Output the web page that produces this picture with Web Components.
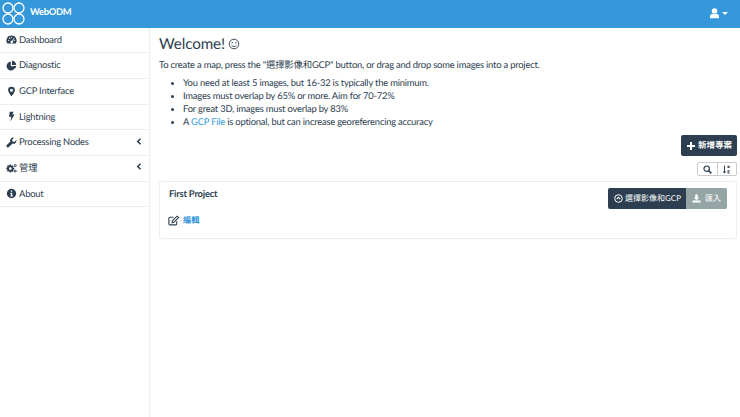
<!DOCTYPE html>
<html>
<head>
<meta charset="utf-8">
<style>
  html, body { margin: 0; height: 100%; background: #fff; }
  body { font: 9.4px/1.43 Lato, "Noto Sans CJK TC", sans-serif; letter-spacing: -.2px; color: #2c3e50; overflow: hidden; text-rendering: geometricPrecision; }
  svg { display: block; }
</style>
</head>
<body>
<wo-app>
  <wo-navbar slot="top"></wo-navbar>
  <wo-sidebar slot="side">
    <wo-nav-item label="Dashboard" icon="dashboard"></wo-nav-item>
    <wo-nav-item label="Diagnostic" icon="pie"></wo-nav-item>
    <wo-nav-item label="GCP Interface" icon="pin"></wo-nav-item>
    <wo-nav-item label="Lightning" icon="bolt"></wo-nav-item>
    <wo-nav-item label="Processing Nodes" icon="wrench" arrow></wo-nav-item>
    <wo-nav-item label="管理" icon="cogs" arrow></wo-nav-item>
    <wo-nav-item label="About" icon="info"></wo-nav-item>
  </wo-sidebar>
  <wo-welcome></wo-welcome>
  <wo-toolbar></wo-toolbar>
  <wo-project name="First Project"></wo-project>
</wo-app>

<script>
(function () {
  'use strict';

  // Icons drawn by hand on a 16x16 box
  var ICONS = {
    dashboard: '<path fill-rule="evenodd" d="M8 2a7.5 7.5 0 0 0-6.6 11l.5.8h12.2l.5-.8A7.5 7.5 0 0 0 8 2zM4 8.2a1 1 0 1 1 0 2 1 1 0 0 1 0-2zm1.4-3a1 1 0 1 1 0 2 1 1 0 0 1 0-2zM8 3.9a1 1 0 1 1 0 2 1 1 0 0 1 0-2zm3.6 1.6.8.5-2.7 4.3a1.8 1.8 0 1 1-.9-.5zM12 8.2a1 1 0 1 1 0 2 1 1 0 0 1 0-2z"/>',
    pie: '<path d="M7 2.4A6.4 6.4 0 1 0 13.6 9H7z"/><path d="M8.6 1v6.2h6.3A6.3 6.3 0 0 0 8.6 1z"/><path d="M10.5 8.6H15a6.4 6.4 0 0 1-1.6 3.6z"/>',
    pin: '<path fill-rule="evenodd" d="M8 1a5 5 0 0 0-5 5c0 2.2 3 6.4 5 9 2-2.600 5-6.800 5-9a5 5 0 0 0-5-5zm0 3a2.200 2.200 0 1 1 0 4.400A2.200 2.200 0 0 1 8 4z"/>',
    bolt: '<path d="M5.500 1h5.500L9.300 5.200h3.200L6.300 15.200l1.500-7H4.300z"/>',
    wrench: '<path d="M15 4.300l-2.900 2.800-2.600-.6-.6-2.600L11.700 1A4.300 4.300 0 0 0 6.300 6.500L1.200 11.600a2.200 2.200 0 0 0 3.100 3.100l5.200-5.100A4.300 4.300 0 0 0 15 4.300z"/>',
    cogs: '<g transform="translate(0 -1.300)"><path fill-rule="evenodd" d="M5.300 3.500h2l.3 1.400 1 .4 1.200-.8 1.400 1.400-.8 1.200.4 1 1.400.3v2l-1.400.3-.4 1 .8 1.200-1.400 1.400-1.200-.8-1 .4-.3 1.300h-2L5 13.800l-1-.4-1.200.8-1.400-1.400.8-1.200-.4-1L.4 10.300v-2l1.400-.3.4-1-.8-1.200 1.400-1.400L4 4.900l1-.4zM6.300 7.300a2 2 0 1 0 0 4 2 2 0 0 0 0-4z"/><path fill-rule="evenodd" d="M13.500 3a2 2 0 1 0 0 4 2 2 0 0 0 0-4zm0 1.200a.8.8 0 1 1 0 1.600.8.8 0 0 1 0-1.600zM13.500 11a2 2 0 1 0 0 4 2 2 0 0 0 0-4zm0 1.200a.8.8 0 1 1 0 1.600.8.8 0 0 1 0-1.600z"/></g>',
    info: '<path fill-rule="evenodd" d="M8 1.200a6.800 6.800 0 1 0 0 13.600A6.800 6.800 0 0 0 8 1.200zM6.900 3.600h2.200v2H6.900zM6.300 6.800h2.800v4h.8v1.500H6.300v-1.500h.8V8.300h-.8z"/>'
  };

  function icon(name, size) {
    return '<svg width="' + size + '" height="' + size + '" viewBox="0 0 16 16" fill="currentColor" aria-hidden="true">' +
      ICONS[name] + '</svg>';
  }

  class WoApp extends HTMLElement {
    connectedCallback() {
      var root = this.attachShadow({ mode: 'open' });
      root.innerHTML =
        '<style>' +
          ':host { display: grid; grid-template-columns: 150px 1fr; grid-template-rows: 27.500px 1fr; height: 417px; }' +
          '.top { grid-column: 1 / 3; }' +
          '.side { border-right: 1px solid #eee; }' +
          '.main { padding: 6px 3px 0 9px; min-width: 0; }' +
        '</style>' +
        '<div class="top"><slot name="top"></slot></div>' +
        '<div class="side"><slot name="side"></slot></div>' +
        '<div class="main"><slot></slot></div>';
    }
  }

  class WoNavbar extends HTMLElement {
    connectedCallback() {
      var root = this.attachShadow({ mode: 'open' });
      root.innerHTML =
        '<style>' +
          ':host { display: flex; height: 27.500px; align-items: center; justify-content: space-between; background: #3498db; color: #fff; }' +
          '.brand { display: flex; align-items: center; gap: 4px; padding-left: 1px; font-weight: 700; letter-spacing: -.3px; }' +
          '.brand span { padding-bottom: 2px; }' +
          '.user { display: flex; align-items: center; gap: 2px; padding-right: 12px; }' +
          '.caret { width: 0; height: 0; border: 3px solid transparent; border-top-color: #fff; border-bottom: 0; }' +
        '</style>' +
        '<div class="brand">' +
          '<svg width="25" height="25" viewBox="0 0 25 25" fill="none" stroke="#fff" stroke-width="1.300">' +
            '<circle cx="7" cy="7" r="5"/><circle cx="18" cy="7" r="5"/>' +
            '<circle cx="7" cy="18" r="5"/><circle cx="18" cy="18" r="5"/>' +
          '</svg>' +
          '<span>WebODM</span>' +
        '</div>' +
        '<div class="user">' +
          '<svg width="11" height="11" viewBox="0 0 16 16" fill="#fff"><circle cx="8" cy="4.500" r="4"/><path d="M1.500 15v-2.500C1.500 10 3.500 8.500 5 8.500c1 .8 5 .8 6 0 1.500 0 3.500 1.500 3.500 4V15z"/></svg>' +
          '<span class="caret"></span>' +
        '</div>';
    }
  }

  class WoSidebar extends HTMLElement {
    connectedCallback() {
      var root = this.attachShadow({ mode: 'open' });
      root.innerHTML =
        '<style>:host { display: flex; flex-direction: column; }</style><slot></slot>';
    }
  }

  class WoNavItem extends HTMLElement {
    connectedCallback() {
      var root = this.attachShadow({ mode: 'open' });
      var arrow = this.hasAttribute('arrow') ?
        '<svg class="arrow" width="6" height="7" viewBox="0 0 6 7" fill="none" stroke="currentColor" stroke-width="1.500"><path d="M4.500 .8 1.700 3.500l2.800 2.700"/></svg>' : '';
      root.innerHTML =
        '<style>' +
          ':host { display: flex; height: 25.700px; box-sizing: border-box; align-items: center; gap: 2px; padding: 0 8px 0 6px; border-bottom: 1px solid #eee; }' +
          '.ico { width: 11px; display: flex; justify-content: center; }' +
          '.label { flex: 1; white-space: nowrap; padding-top: 1px; }' +
          '.arrow { margin-right: -1px; margin-bottom: 3px; }' +
        '</style>' +
        '<span class="ico">' + icon(this.getAttribute('icon'), 11) + '</span>' +
        '<span class="label">' + this.getAttribute('label') + '</span>' + arrow;
    }
  }

  class WoWelcome extends HTMLElement {
    connectedCallback() {
      var root = this.attachShadow({ mode: 'open' });
      root.innerHTML =
        '<style>' +
          ':host { display: block; }' +
          'h3 { margin: 0; display: flex; align-items: center; gap: 3px; height: 20px; font-size: 15.200px; font-weight: 400; line-height: 20px; letter-spacing: -.1px; }' +
          'p { margin: 5px 0 0; height: 14px; line-height: 14px; white-space: nowrap; }' +
          'ul { margin: 5.500px 0 0; padding: 0 0 0 24px; }' +
          'li { height: 12.900px; line-height: 12.900px; white-space: nowrap; }' +
          'a { color: #3498db; text-decoration: none; }' +
        '</style>' +
        '<h3>Welcome! <svg width="12" height="12" viewBox="0 0 12 12" fill="none" stroke="#2c3e50" stroke-width=".9"><circle cx="6" cy="6" r="4.800"/><path d="M3.500 7.200c1 1.700 4 1.700 5 0"/><path d="M4.200 4v1.200M7.800 4v1.200" stroke-width="1.100"/></svg></h3>' +
        '<p>To create a map, press the "選擇影像和GCP" button, or drag and drop some images into a project.</p>' +
        '<ul>' +
          '<li>You need at least 5 images, but 16-32 is typically the minimum.</li>' +
          '<li>Images must overlap by 65% or more. Aim for 70-72%</li>' +
          '<li>For great 3D, images must overlap by 83%</li>' +
          '<li>A <a>GCP File</a> is optional, but can increase georeferencing accuracy</li>' +
        '</ul>';
    }
  }

  class WoToolbar extends HTMLElement {
    connectedCallback() {
      var root = this.attachShadow({ mode: 'open' });
      root.innerHTML =
        '<style>' +
          ':host { display: flex; flex-direction: column; align-items: flex-end; gap: 6px; margin-top: 5.500px; }' +
          '.add { display: flex; align-items: center; gap: 3px; height: 21px; padding: 0 5px 0 6px; background: #2c3e50; color: #fff; border-radius: 2px; font-size: 8.500px; font-weight: 700; letter-spacing: 0; }' +
          '.group { display: flex; height: 14px; border: 1px solid #ccc; border-radius: 2px; box-sizing: border-box; }' +
          '.group span { display: flex; align-items: center; justify-content: center; width: 18.500px; color: #2c3e50; }' +
          '.group span + span { border-left: 1px solid #ccc; }' +
        '</style>' +
        '<div class="add">' +
          '<svg width="8" height="8" viewBox="0 0 8 8" fill="#fff"><path d="M3 0h2v3h3v2H5v3H3V5H0V3h3z"/></svg>' +
          '<span>新增專案</span>' +
        '</div>' +
        '<div class="group">' +
          '<span><svg width="9" height="9" viewBox="0 0 9 9" fill="none" stroke="#2c3e50" stroke-width="1.200"><circle cx="3.700" cy="3.700" r="2.700"/><path d="M5.700 5.700 8.400 8.400" stroke-width="1.500"/></svg></span>' +
          '<span><svg width="9" height="9" viewBox="0 0 9 9" fill="#2c3e50"><path d="M2 .5h1v6h1.300L2.500 8.600.7 6.500H2z"/><path d="M5.500 .7h2.200v2.400H5.500zM5.500 5.300h2.600v.9H6.800v1.500h1.300v.9H5.500z" opacity=".85"/></svg></span>' +
        '</div>';
    }
  }

  class WoProject extends HTMLElement {
    connectedCallback() {
      var root = this.attachShadow({ mode: 'open' });
      root.innerHTML =
        '<style>' +
          ':host { display: block; margin-top: 5px; height: 58px; box-sizing: border-box; border: 1px solid #eee; border-radius: 2px; padding: 6px 9px; }' +
          '.row { display: flex; justify-content: space-between; align-items: flex-start; }' +
          '.name { font-weight: 700; line-height: 12px; padding-top: 1px; }' +
          '.btns { display: flex; height: 21px; font-size: 8px; color: #fff; letter-spacing: 0; }' +
          '.btns div { display: flex; align-items: center; gap: 2px; padding: 0 5px 0 6px; }' +
          '.select { background: #2c3e50; border-radius: 2px 0 0 2px; }' +
          '.import { background: #95a5a6; border-radius: 0 2px 2px 0; gap: 4px !important; padding: 0 6px !important; }' +
          '.edit { display: flex; align-items: center; gap: 3px; margin-top: 6px; }' +
          '.edit svg { margin-left: -1px; }' +
          '.edit a { color: #3498db; font-size: 8.200px; font-weight: 700; letter-spacing: 0; text-decoration: none; }' +
        '</style>' +
        '<div class="row">' +
          '<div class="name">' + this.getAttribute('name') + '</div>' +
          '<div class="btns">' +
            '<div class="select"><svg width="9" height="9" viewBox="0 0 9 9" fill="none" stroke="#fff"><circle cx="4.500" cy="4.500" r="3.800"/><path d="M2.800 5 4.500 3.200 6.200 5" stroke-width="1.100"/></svg><span>選擇影像和GCP</span></div>' +
            '<div class="import"><svg width="9" height="9" viewBox="0 0 9 9" fill="#fff"><path d="M3.300 .5h2.400v3H7.300L4.500 6.200 1.700 3.500h1.600z"/><path d="M.5 6.500h8v2h-8z"/></svg><span>匯入</span></div>' +
          '</div>' +
        '</div>' +
        '<div class="edit">' +
          '<svg width="12" height="11" viewBox="0 0 11 10" fill="none" stroke="#2c3e50"><path d="M8 5.800v2.200a1 1 0 0 1-1 1H1.800a1 1 0 0 1-1-1V3a1 1 0 0 1 1-1H5"/><path d="M4 5.200 8.300 1l1.400 1.300L5.400 6.600 3.800 7z"/></svg>' +
          '<a>編輯</a>' +
        '</div>';
    }
  }

  customElements.define('wo-app', WoApp);
  customElements.define('wo-navbar', WoNavbar);
  customElements.define('wo-sidebar', WoSidebar);
  customElements.define('wo-nav-item', WoNavItem);
  customElements.define('wo-welcome', WoWelcome);
  customElements.define('wo-toolbar', WoToolbar);
  customElements.define('wo-project', WoProject);
})();
</script>
</body>
</html>
